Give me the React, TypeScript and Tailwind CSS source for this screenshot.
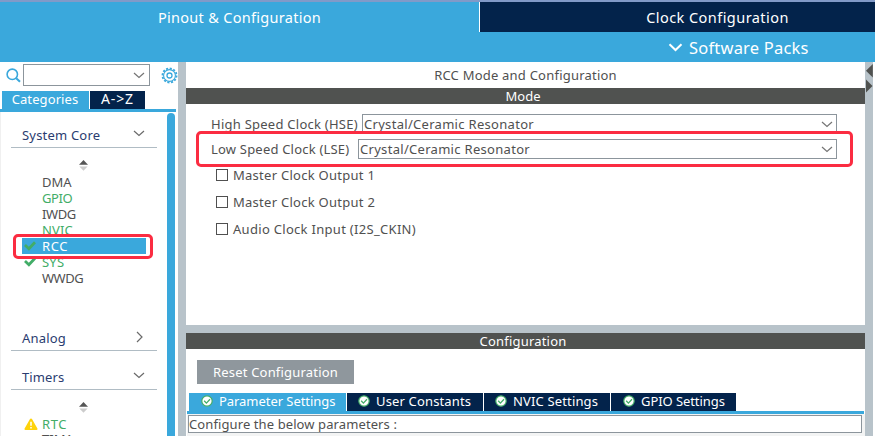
import React from "react";

type IconProps = { className?: string };

const ChevronDown = ({ className = "" }: IconProps) => (
  <svg className={`h-[7px] w-[12px] shrink-0 ${className}`} viewBox="0 0 12 7" fill="none" stroke="currentColor" strokeWidth="1.2">
    <path d="M1 1l5 4.5L11 1" />
  </svg>
);

const ChevronRight = ({ className = "" }: IconProps) => (
  <svg className={`h-[12px] w-[7px] shrink-0 ${className}`} viewBox="0 0 7 12" fill="none" stroke="currentColor" strokeWidth="1.2">
    <path d="M1 1l5 5-5 5" />
  </svg>
);

const SearchIcon = () => (
  <svg className="ml-[6px] h-[15px] w-[15px] shrink-0" viewBox="0 0 15 15" fill="none" stroke="#3aa8dc" strokeWidth="1.6">
    <circle cx="6.3" cy="6.3" r="5.2" />
    <path d="M10.2 10.2l3.8 3.6" strokeWidth="2" />
  </svg>
);

const GearIcon = () => (
  <svg className="h-[17px] w-[17px] shrink-0" viewBox="0 0 17 17" fill="none" stroke="#3aa8dc">
    <circle cx="8.5" cy="8.5" r="7" strokeWidth="1.9" strokeDasharray="2.1 1.565" />
    <circle cx="8.5" cy="8.5" r="5.9" strokeWidth="1.1" />
    <circle cx="8.5" cy="8.5" r="2.5" strokeWidth="1.3" />
  </svg>
);

const SortArrows = () => (
  <svg className="ml-[79px] block h-[11px] w-[9px]" viewBox="0 0 9 11">
    <path d="M4.5 0L9 4.8H0z" fill="#555" />
    <path d="M4.5 10.8L8.6 6.4H0.4z" fill="#ccc" />
  </svg>
);

const Check = () => (
  <svg className="h-[10px] w-[12px]" viewBox="0 0 12 10" fill="none" stroke="#42ad67" strokeWidth="2.8">
    <path d="M1 4l3.9 3.7L11 1.2" />
  </svg>
);

const Warning = () => (
  <svg className="h-[12px] w-[14px]" viewBox="0 0 14 12">
    <path d="M7 0.4c.5 0 .8.3 1 .7l5.4 9.4c.4.8 0 1.4-.8 1.4H1.4c-.8 0-1.2-.6-.8-1.4L6 1.1c.2-.4.5-.7 1-.7z" fill="#fed30b" />
    <path d="M7 3.8v4M7 9v1.6" stroke="#fff" strokeWidth="1.5" />
  </svg>
);

const StatusOk = () => (
  <svg className="mb-[2px] h-[12px] w-[12px] shrink-0" viewBox="0 0 12 12" fill="none" stroke="#42ad67">
    <circle cx="6" cy="6" r="5.2" fill="#fff" strokeWidth="1.2" />
    <path d="M3.2 5.8l2.2 2.3 3.6-3.9" strokeWidth="1.3" />
  </svg>
);

const Section = ({ title, open, tracking }: { title: string; open: boolean; tracking: string }) => (
  <div className="ml-[11px] flex h-[24px] w-[146px] items-center justify-between border-b border-[#b0bcc4] pr-[12px] pb-[2px] pl-[11px] text-[#2a3c70]">
    <span className={tracking}>{title}</span>
    {open ? <ChevronDown className="mb-[2px] text-[#6a6a6a]" /> : <ChevronRight className="mr-[2px] mb-[2px] text-[#6a6a6a]" />}
  </div>
);

type ItemProps = { name: string; state?: "plain" | "green" | "selected"; icon?: React.ReactNode; tracking?: string };

const tones = {
  plain: "text-[#505050]",
  green: "text-[#42ad67]",
  selected: "bg-[#3aa8dc] text-white",
};

const Item = ({ name, state = "plain", icon, tracking = "tracking-[0px]" }: ItemProps) => (
  <div className={`ml-[22px] flex h-[16px] w-[124px] items-center ${tones[state]}`}>
    <span className="flex w-[20px] shrink-0 items-center pl-[2px]">{icon}</span>
    <span className={tracking}>{name}</span>
  </div>
);

const Select = ({ value, width }: { value: string; width: string }) => (
  <div className={`flex h-[20px] items-center justify-between border border-[#8c959c] pr-[3px] pl-[1px] ${width}`}>
    <span className="tracking-[0.3px]">{value}</span>
    <ChevronDown className="text-[#757575]" />
  </div>
);

const Option = ({ label, tracking }: { label: string; tracking: string }) => (
  <div className="flex h-[27px] items-center">
    <span className="ml-[30px] h-[12px] w-[12px] border border-[#505050]" />
    <span className={`ml-[5px] ${tracking}`}>{label}</span>
  </div>
);

const ConfigTab = ({ label, style }: { label: string; style: string }) => (
  <div className={`flex h-[18px] items-center text-white ${style}`}>
    <StatusOk />
    <span className="mb-[2px] ml-[6px]">{label}</span>
  </div>
);

export default function App() {
  return (
    <div className="relative flex h-[436px] w-[875px] flex-col overflow-hidden bg-white font-['Noto_Sans','Open_Sans',sans-serif] text-[13px] leading-[16px] whitespace-nowrap text-[#505050]">
      <header className="shrink-0 border-t-2 border-[#819ac8] bg-[#3aa8dc] text-white">
        <div className="flex h-[30px] text-[14.5px]">
          <div className="flex w-[479px] items-center justify-center pb-px tracking-[0.3px]">Pinout &amp; Configuration</div>
          <div className="flex flex-1 items-center justify-center border-l border-white bg-[#03234b] pb-px pl-[80px] tracking-[0.45px]">Clock Configuration</div>
        </div>
        <div className="flex h-[30px] items-center pl-[668px] text-[16.5px]">
          <svg className="h-[9px] w-[15px]" viewBox="0 0 15 9" fill="none" stroke="white" strokeWidth="2">
            <path d="M1.5 1.2l6 5.8 6-5.8" />
          </svg>
          <span className="mt-px ml-[6px] tracking-[0.2px]">Software Packs</span>
        </div>
      </header>

      <div className="flex min-h-0 flex-1">
        <aside className="flex w-[178px] shrink-0 flex-col">
          <div className="flex h-[29px] shrink-0 items-center pb-[3px]">
            <SearchIcon />
            <div className="ml-[2px] flex h-[22px] w-[128px] items-center justify-end border border-[#8c959c] pr-[4px]">
              <ChevronDown className="text-[#757575]" />
            </div>
            <div className="ml-[11px]"><GearIcon /></div>
          </div>
          <div className="flex h-[18px] shrink-0 gap-px pl-[2px] text-white">
            <div className="flex w-[87px] items-center justify-center bg-[#3aa8dc] pr-px pb-[2px] tracking-[0.1px]">Categories</div>
            <div className="flex w-[55px] items-center justify-center bg-[#03234b] pb-[2px] text-[14px] tracking-[0.9px]">A-&gt;Z</div>
          </div>
          <div className="h-[3px] w-[176px] shrink-0 bg-[#3aa8dc]" />
          <div className="flex min-h-0 flex-1">
            <nav className="w-[167px] overflow-hidden pt-[12px] shadow-[inset_1px_0_0_#f0f0f0]">
              <Section title="System Core" open tracking="tracking-[0.2px]" />
              <div className="h-[26px] pt-[12px]"><SortArrows /></div>
              <Item name="DMA" />
              <Item name="GPIO" state="green" tracking="tracking-[-0.4px]" />
              <Item name="IWDG" tracking="tracking-[-0.4px]" />
              <Item name="NVIC" state="green" tracking="tracking-[0.1px]" />
              <Item name="RCC" state="selected" icon={<Check />} tracking="tracking-[0.6px]" />
              <Item name="SYS" state="green" icon={<Check />} tracking="tracking-[0.2px]" />
              <Item name="WWDG" tracking="tracking-[-0.5px]" />
              <div className="h-[41px]" />
              <Section title="Analog" open={false} tracking="tracking-[0.2px]" />
              <div className="h-[15px]" />
              <Section title="Timers" open tracking="tracking-[0.1px]" />
              <div className="h-[26px] pt-[12px]"><SortArrows /></div>
              <Item name="RTC" state="green" icon={<Warning />} tracking="tracking-[0.6px]" />
              <div className="-mt-px"><Item name="TIM1" /></div>
            </nav>
            <div className="mt-[1px] w-[8px] rounded-t-[4px] bg-[#3aa8dc]" />
          </div>
        </aside>

        <div className="w-[8px] shrink-0 bg-[#b8c3ca]" />

        <main className="flex w-[679px] shrink-0 flex-col">
          <div className="flex h-[26px] shrink-0 items-center justify-center tracking-[0.22px]">RCC Mode and Configuration</div>
          <div className="flex h-[16px] shrink-0 items-center justify-center bg-[#505250] pr-[5px] text-white">Mode</div>
          <section className="flex h-[221px] shrink-0 flex-col pt-[10px]">
            <div className="flex h-[20px] items-center pl-[25px]">
              <span className="w-[151px] tracking-[0.25px]">High Speed Clock (HSE)</span>
              <Select value="Crystal/Ceramic Resonator" width="w-[475px]" />
            </div>
            <div className="mt-[5px] flex h-[20px] items-center pl-[25px]">
              <span className="w-[147px] tracking-[0.2px]">Low Speed Clock (LSE)</span>
              <Select value="Crystal/Ceramic Resonator" width="w-[479px]" />
            </div>
            <div className="mt-[2px]">
              <Option label="Master Clock Output 1" tracking="tracking-[0.27px]" />
              <Option label="Master Clock Output 2" tracking="tracking-[0.27px]" />
              <Option label="Audio Clock Input (I2S_CKIN)" tracking="tracking-[0.3px]" />
            </div>
          </section>
          <div className="h-[8px] shrink-0 bg-[#b8c3ca]" />
          <div className="flex h-[16px] shrink-0 items-center justify-center bg-[#505250] pr-[5px] tracking-[0.2px] text-white">Configuration</div>
          <section className="flex flex-1 flex-col pt-[11px]">
            <button className="ml-[11px] h-[24px] w-[157px] bg-[#8f979d] tracking-[0.2px] text-white">Reset Configuration</button>
            <div className="mt-[9px] flex gap-px pl-[3px]">
              <ConfigTab label="Parameter Settings" style="w-[157px] bg-[#3aa8dc] pl-[12px] tracking-[-0.05px]" />
              <ConfigTab label="User Constants" style="w-[136px] bg-[#03234b] pl-[11px] tracking-[0.15px]" />
              <ConfigTab label="NVIC Settings" style="w-[126px] bg-[#03234b] pl-[11px] tracking-[0.15px]" />
              <ConfigTab label="GPIO Settings" style="w-[125px] bg-[#03234b] pl-[12px] tracking-[-0.07px]" />
            </div>
            <div className="ml-px h-[3px] w-[677px] bg-[#3aa8dc]" />
            <div className="ml-px flex-1 bg-[#f3f4f4] pt-[1px] pl-px">
              <div className="flex h-[18px] w-[674px] items-center border border-[#8c959c] bg-white tracking-[0.1px]">Configure the below parameters :</div>
            </div>
          </section>
        </main>

        <div className="w-[8px] shrink-0 bg-[#b8c3ca] pt-[2px]">
          <svg className="block h-[29px] w-[8px]" viewBox="0 0 8 29" fill="#505250">
            <path d="M7.8 0v13.5L1 6.7z" />
            <path d="M1 15.5v13l6.5-6.5z" />
          </svg>
        </div>
      </div>

      <div className="absolute top-[234px] left-[13px] h-[25px] w-[140px] rounded-[5px] border-3 border-[#fb2c41]" />
      <div className="absolute top-[131px] left-[196px] h-[36px] w-[657px] rounded-[5px] border-3 border-[#fb2c41]" />
    </div>
  );
}
